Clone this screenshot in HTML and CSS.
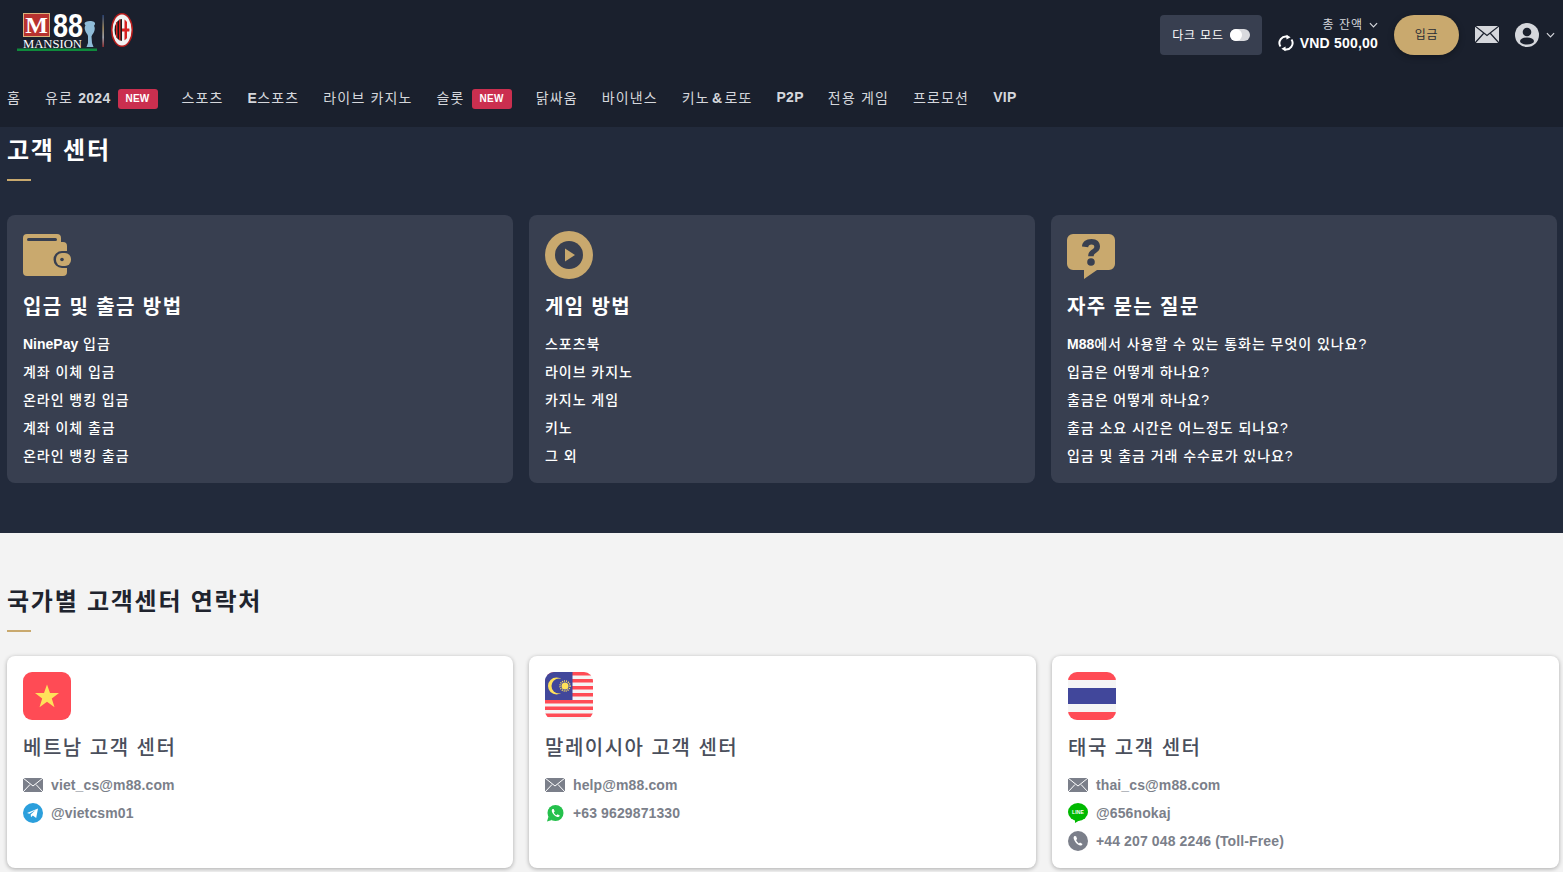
FILE: index.html
```html
<!DOCTYPE html>
<html lang="ko">
<head>
<meta charset="utf-8">
<title>고객 센터</title>
<link rel="stylesheet" href="styles.css">
</head>
<body>
<header class="topbar">
  <a class="logo" href="#">
    <svg width="117" height="46" viewBox="0 -6 117 46">
      <defs>
        <clipPath id="crestclip"><ellipse cx="105" cy="17" rx="7.500" ry="11"/></clipPath>
        <linearGradient id="stripe" x1="0" y1="0" x2="0" y2="1">
          <stop offset="0" stop-color="#2f4f8f"/><stop offset=".4" stop-color="#c9a96e"/><stop offset=".7" stop-color="#d5d7dc"/><stop offset="1" stop-color="#b8322f"/>
        </linearGradient>
      </defs>
      <rect x="6.500" y=".5" width="26" height="23" fill="#b8322f" stroke="#d9b27a"/>
      <text x="19.500" y="20" class="logo-m">M</text>
      <text x="36" y="24" class="logo-88" textLength="30" lengthAdjust="spacingAndGlyphs">88</text>
      <text x="6" y="35" class="logo-mansion" textLength="59" lengthAdjust="spacingAndGlyphs">MANSION</text>
      <rect x="0" y="35.500" width="80" height="2.500" fill="#0f8a3c"/>
      <path d="M73 8c-3 0-5.500 1-5.500 2.500 0 1 .8 1 1 2-.8 1-1 2.500-.5 4.500.5 2.500 2.500 4 3 6L71 30l-1.500 4h7L75 30l-.5-6.500c.5-2 2.500-3.500 3-6 .5-2 .3-3.500-.5-4.500.2-1 1-1 1-2C78.500 9 76 8 73 8z" fill="#8fbcd8"/>
      <rect x="85.500" y="2" width="1.200" height="32" fill="url(#stripe)"/>
      <ellipse cx="105" cy="17" rx="11" ry="17" fill="#b81d1d"/>
      <ellipse cx="105" cy="17" rx="9.500" ry="15.500" fill="#f2f2f2"/>
      <g clip-path="url(#crestclip)">
        <rect x="97" y="5" width="16" height="24" fill="#f5f5f5"/>
        <path d="M97 5h8v24h-8z" fill="#1a1a1a"/>
        <path d="M99 5h1.500v24H99zM102 5h1.500v24H102z" fill="#d8201f"/>
        <path d="M107.500 5h2.500v24h-2.500zM105 15.500h8v3h-8z" fill="#d8201f"/>
      </g>
    </svg>
  </a>
  <div class="top-actions">
    <div class="mode"><span>다크 모드</span><i class="toggle"></i></div>
    <div class="balance">
      <div class="bal-label">총 잔액
        <svg class="chev" viewBox="0 0 10 6"><path d="M1 1l4 4 4-4" fill="none" stroke="#d5d7dc" stroke-width="1.300"/></svg>
      </div>
      <div class="bal-value">
        <svg class="sync" viewBox="0 0 18 18"><path d="M2.800 13A7.400 7.400 0 0 1 11 1.900M15.200 5A7.400 7.400 0 0 1 7 16.100" fill="none" stroke="#fff" stroke-width="2.200"/><path d="M9.500-.2l4.700 2.700-4.700 2.700zM8.500 18.200l-4.700-2.700 4.700-2.700z" fill="#fff"/></svg>
        <span>VND 500,00</span>
      </div>
    </div>
    <button class="deposit"><span>입금</span></button>
    <svg class="mail-top" viewBox="0 0 24 18"><rect width="24" height="17" rx="1" fill="#d5d7dc"/><path d="M0 0l12 9.500L24 0M0 17l8.500-9.500M24 17l-8.500-9.500" fill="none" stroke="#1a202d" stroke-width="1.200"/></svg>
    <svg class="avatar" viewBox="0 0 24 24"><circle cx="12" cy="12" r="12" fill="#d5d7dc"/><circle cx="12" cy="9" r="4.300" fill="#1a202d"/><ellipse cx="12" cy="18" rx="7" ry="3.600" fill="#1a202d"/></svg>
    <svg class="chev chev-end" viewBox="0 0 10 6"><path d="M1 1l4 4 4-4" fill="none" stroke="#d5d7dc" stroke-width="1.300"/></svg>
  </div>
</header>
<nav class="nav">
  <a>홈</a>
  <a><span>유로 <span class="lat">2024</span></span><b class="new">NEW</b></a>
  <a>스포츠</a>
  <a><span><span class="lat">E</span>스포츠</span></a>
  <a>라이브 카지노</a>
  <a><span>슬롯</span><b class="new">NEW</b></a>
  <a>닭싸움</a>
  <a>바이낸스</a>
  <a class="tight"><span>키노 <span class="lat">&amp;</span> 로또</span></a>
  <a><span class="lat">P2P</span></a>
  <a>전용 게임</a>
  <a>프로모션</a>
  <a><span class="lat">VIP</span></a>
</nav>
<main>
  <section class="help">
    <h1 class="page-title">고객 센터</h1>
    <div class="rule"></div>
    <div class="help-grid">
      <article class="help-card">
        <svg class="card-icon" viewBox="0 0 48 48"><path d="M4 3h30a4 4 0 0 1 4 4v4h2a4 4 0 0 1 4 4v26a4 4 0 0 1-4 4H4a4 4 0 0 1-4-4V7a4 4 0 0 1 4-4z" fill="#c9a96e"/><rect x="4" y="7" width="30" height="3" rx="1.500" fill="#383f50"/><path d="M39 20h5v17h-5a8.500 8.500 0 0 1 0-17z" fill="#383f50"/><rect x="33" y="22" width="15" height="13" rx="6" fill="#c9a96e"/><circle cx="39" cy="28.500" r="1.800" fill="#383f50"/></svg>
        <h2>입금 및 출금 방법</h2>
        <ul><li><span class="lat">NinePay</span> 입금</li><li>계좌 이체 입금</li><li>온라인 뱅킹 입금</li><li>계좌 이체 출금</li><li>온라인 뱅킹 출금</li></ul>
      </article>
      <article class="help-card">
        <svg class="card-icon" viewBox="0 0 48 48"><circle cx="24" cy="24" r="24" fill="#c9a96e"/><circle cx="24" cy="24" r="14" fill="#383f50"/><path d="M20 17.500L30 24l-10 6.500z" fill="#c9a96e"/></svg>
        <h2>게임 방법</h2>
        <ul><li>스포츠북</li><li>라이브 카지노</li><li>카지노 게임</li><li>키노</li><li>그 외</li></ul>
      </article>
      <article class="help-card">
        <svg class="card-icon" viewBox="0 0 48 48"><path d="M6 3h36a6 6 0 0 1 6 6v24a6 6 0 0 1-6 6H30L17 48V39H6a6 6 0 0 1-6-6V9a6 6 0 0 1 6-6z" fill="#c9a96e"/><path d="M15 15.500C15 11 19 8 24.500 8S33 11 33 15.500c0 3.300-2 5-4.200 6.400-1.500 1-2.100 1.800-2.100 3.400h-5.500c0-3 1-4.800 3.200-6.300 1.800-1.200 2.900-2 2.900-3.300 0-1.300-1.100-2.200-2.800-2.200-1.900 0-3.100 1-3.300 2.800z" fill="#383f50"/><circle cx="24" cy="31" r="3.800" fill="#383f50"/></svg>
        <h2>자주 묻는 질문</h2>
        <ul><li><span class="lat">M88</span>에서 사용할 수 있는 통화는 무엇이 있나요?</li><li>입금은 어떻게 하나요?</li><li>출금은 어떻게 하나요?</li><li>출금 소요 시간은 어느정도 되나요?</li><li>입금 및 출금 거래 수수료가 있나요?</li></ul>
      </article>
    </div>
  </section>
  <section class="contact">
    <h1 class="page-title dark">국가별 고객센터 연락처</h1>
    <div class="rule"></div>
    <div class="contact-grid">
      <article class="contact-card">
        <svg class="card-icon" viewBox="0 0 48 48"><rect width="48" height="48" rx="9" fill="#ff4b55"/><path d="M24 12.500l3 8.500h9l-7.200 5.400 2.700 8.800L24 29.800l-7.500 5.400 2.700-8.800L12 21h9z" fill="#ffe15a"/></svg>
        <h3>베트남 고객 센터</h3>
        <div class="row"><svg class="ic" viewBox="0 0 20 20"><use href="#mail"/></svg><span>viet_cs@m88.com</span></div>
        <div class="row"><svg class="ic" viewBox="0 0 20 20"><circle cx="10" cy="10" r="10" fill="#2b9fdc"/><path d="M4 10l11-4.500-1.800 9.500-3.400-2.400-1.800 1.700-.3-2.800 5-4.500-6.300 3.800z" fill="#fff"/></svg><span>@vietcsm01</span></div>
      </article>
      <article class="contact-card">
        <svg class="card-icon" viewBox="0 0 48 48">
          <defs><clipPath id="flagclip"><rect width="48" height="48" rx="9"/></clipPath></defs>
          <g clip-path="url(#flagclip)">
            <rect width="48" height="48" fill="#f5f5f5"/>
            <path d="M0 0h48v3.400H0zM0 7h48v3.400H0zM0 14h48v3.400H0zM0 21h48v3.400H0zM0 28h48v3.400H0zM0 34.500h48v3.400H0zM0 41.500h48v3.400H0z" fill="#ff4b55"/>
            <rect width="27.500" height="28" fill="#41479b"/>
            <circle cx="11.500" cy="14" r="8.500" fill="#ffe15a"/><circle cx="14" cy="14" r="7.500" fill="#41479b"/>
            <circle cx="20" cy="14" r="3.500" fill="#ffe15a"/><circle cx="20" cy="14" r="5" fill="none" stroke="#ffe15a" stroke-width="1.500" stroke-dasharray="1 1"/>
          </g>
        </svg>
        <h3>말레이시아 고객 센터</h3>
        <div class="row"><svg class="ic" viewBox="0 0 20 20"><use href="#mail"/></svg><span>help@m88.com</span></div>
        <div class="row"><svg class="ic" viewBox="0 0 20 20"><circle cx="10.500" cy="10" r="8" fill="#25c04c"/><path d="M2 18.500l1.500-5 3.500 3.500z" fill="#25c04c"/><path d="M7.500 6c-1 .8-1 2.200 0 4 1 1.800 3 3.700 5 4 1.200.1 2-.5 2.300-1.500l-2.300-1.300-1 1c-1-.4-2.200-1.500-2.700-2.800l.9-1L8.700 6z" fill="#fff"/></svg><span>+63 9629871330</span></div>
      </article>
      <article class="contact-card">
        <svg class="card-icon" viewBox="0 0 48 48">
          <defs><clipPath id="thclip"><rect width="48" height="48" rx="9"/></clipPath></defs>
          <g clip-path="url(#thclip)">
            <rect width="48" height="48" fill="#f5f5f5"/>
            <rect y="16" width="48" height="16" fill="#41479b"/>
            <rect width="48" height="8" fill="#ff4b55"/><rect y="40" width="48" height="8" fill="#ff4b55"/>
          </g>
        </svg>
        <h3>태국 고객 센터</h3>
        <div class="row"><svg class="ic" viewBox="0 0 20 20"><use href="#mail"/></svg><span>thai_cs@m88.com</span></div>
        <div class="row"><svg class="ic" viewBox="0 0 20 20"><ellipse cx="10" cy="9" rx="10" ry="9" fill="#00b900"/><path d="M7 17l5 0-5 3z" fill="#00b900"/><text x="10" y="11" class="line-t">LINE</text></svg><span>@656nokaj</span></div>
        <div class="row"><svg class="ic" viewBox="0 0 20 20"><circle cx="10" cy="10" r="10" fill="#7b7f8a"/><path d="M6.500 5c-1.200.8-1.200 2.500 0 4.500 1.200 2.200 3.200 4.500 5.500 5 1.200.2 2-.4 2.500-1.500l-2.500-1.600-1.100 1c-1-.5-2.300-2-2.800-3.300l1-1-1-2.800z" fill="#fff"/></svg><span>+44 207 048 2246 (Toll-Free)</span></div>
      </article>
    </div>
  </section>
</main>
<svg class="sprite" width="0" height="0"><defs><g id="mail"><rect y="3" width="20" height="14" rx="1" fill="#7b7f8a"/><path d="M0 3l10 8 10-8M0 17l7-7.500M20 17l-7-7.500" fill="none" stroke="#fff" stroke-width="1"/></g></defs></svg>
</body>
</html>
```
FILE: styles.css
```css
* { box-sizing: border-box; }
html, body { margin: 0; height: 100%; overflow: hidden; }
body { font-family: "Liberation Sans", "Noto Sans CJK KR", sans-serif; background: #f3f3f3; color: #fff; }
.lat { font-weight: 700; letter-spacing: .3px; }
.topbar { height: 71px; background: #1a202d; display: flex; justify-content: space-between; align-items: flex-start; padding: 7px 8px 0 17px; }
.logo { display: block; height: 46px; }
.logo svg { display: block; }
.logo-m { font-family: "Liberation Serif", serif; font-weight: 700; font-size: 24px; fill: #fff; text-anchor: middle; }
.logo-88 { font-family: "Liberation Sans", sans-serif; font-weight: 700; font-size: 33px; fill: #fff; }
.logo-mansion { font-family: "Liberation Serif", serif; font-size: 11.500px; fill: #fff; }
.top-actions { display: flex; align-items: center; padding-top: 8px; }
.mode { width: 102px; height: 40px; background: #383f50; border-radius: 4px; display: flex; align-items: center; justify-content: center; gap: 6px; font-size: 12px; color: #fff; letter-spacing: .85px; padding-bottom: 2px; }
.toggle { width: 20px; height: 12px; border-radius: 6px; background: #d9dade; display: block; margin-top: 2px; position: relative; }
.toggle::before { content: ""; position: absolute; left: 0; top: 0; width: 12px; height: 12px; border-radius: 50%; background: #fff; }
.balance { width: 116px; align-self: flex-start; display: flex; flex-direction: column; align-items: flex-end; padding-top: 1px; }
.bal-label { font-size: 12px; color: #d5d7dc; line-height: 18px; display: flex; align-items: center; gap: 6px; letter-spacing: 1px; }
.chev { width: 9px; height: 6px; display: block; }
.bal-value { display: flex; align-items: center; gap: 6px; font-size: 14px; font-weight: 700; line-height: 18px; letter-spacing: .2px; }
.sync { width: 16px; height: 18px; display: block; }
.deposit { width: 65px; height: 40px; margin-left: 16px; border: 0; border-radius: 20px; padding: 0 0 3px; background: #c9a96e; color: #2a2d35; font: 12px "Liberation Sans", "Noto Sans CJK KR", sans-serif; letter-spacing: .8px; box-shadow: 0 2px 6px rgba(0,0,0,.3); }
.mail-top { width: 24px; height: 18px; margin-left: 16px; display: block; }
.avatar { width: 24px; height: 24px; margin-left: 16px; display: block; }
.chev-end { margin-left: 7px; }
.nav { height: 56px; background: #1a202d; display: flex; align-items: center; gap: 24px; padding: 0 7px 5px; font-size: 14px; color: #d5d7dc; letter-spacing: 1.150px; }
.nav a { display: flex; align-items: center; gap: 7px; }
.nav .tight { word-spacing: -3px; }
.new { display: block; width: 40px; height: 20px; margin-top: 4px; background: #cb2f4f; border-radius: 3px; font-size: 10px; line-height: 20px; text-align: center; color: #fff; letter-spacing: .3px; }
.help { height: 406px; background: #222a3b; padding: 8px 6px 0 7px; }
.page-title { margin: 0; font-size: 24px; line-height: 32px; font-weight: 700; color: #fff; letter-spacing: 1.750px; }
.page-title.dark { color: #20242e; }
.rule { width: 24px; height: 2px; background: #c9a96e; margin-top: 12px; }
.help-grid { display: grid; grid-template-columns: repeat(3, 1fr); gap: 16px; margin-top: 34px; }
.help-card { height: 268px; background: #383f50; border-radius: 8px; padding: 16px; }
.card-icon { width: 48px; height: 48px; display: block; }
.help-card h2 { margin: 13px 0 0; font-size: 20px; line-height: 30px; font-weight: 700; color: #fff; letter-spacing: 1.400px; }
.help-card ul { list-style: none; margin: 8px 0 0; padding: 0; }
.help-card li { font-size: 14px; line-height: 28px; font-weight: 500; color: #fff; letter-spacing: .95px; }
.help-card .lat { letter-spacing: 0; }
.contact { padding: 53px 4px 0 7px; }
.contact-grid { display: grid; grid-template-columns: 506px 507px 507px; gap: 16px; margin-top: 24px; }
.contact-card { height: 212px; background: #fff; border-radius: 8px; padding: 16px; box-shadow: 0 1px 4px rgba(0,0,0,.3); }
.contact-card h3 { margin: 13px 0 0; font-size: 20px; line-height: 30px; font-weight: 500; color: #4a4f5c; letter-spacing: 1.500px; }
.row { display: flex; align-items: center; gap: 8px; height: 28px; font-size: 14px; font-weight: 700; color: #7b7f8a; letter-spacing: .12px; }
.contact-card h3 + .row { margin-top: 8px; }
.ic { width: 20px; height: 20px; display: block; flex: none; }
.line-t { font: 700 5px "Liberation Sans", sans-serif; fill: #fff; text-anchor: middle; }
.sprite { position: absolute; }
```
